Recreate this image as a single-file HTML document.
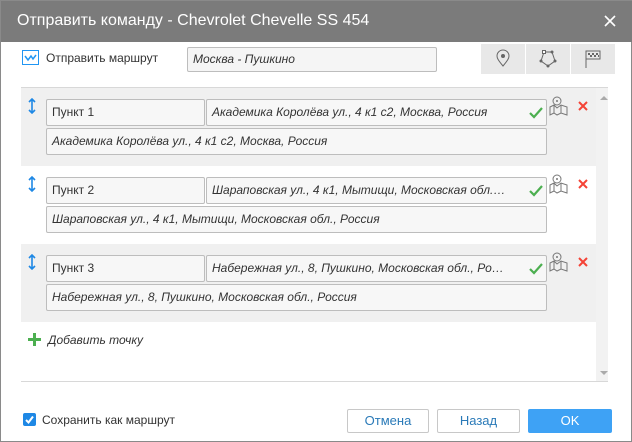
<!DOCTYPE html>
<html><head><meta charset="utf-8"><style>
*{box-sizing:border-box;margin:0;padding:0}
body{width:632px;height:442px;font-family:"Liberation Sans",Arial,sans-serif;font-size:12px;color:#333;background:#fff;position:relative;overflow:hidden}
.win{position:absolute;left:0;top:0;width:632px;height:442px;border:1px solid #8a8a8a;background:#fff}
.title{position:absolute;left:0;top:0;width:632px;height:41px;background:#7b7b7b;color:#fff;font-size:16px;line-height:40px;padding-left:16px}
.a{position:absolute}
.inp{position:absolute;background:#f7f7f7;border:1px solid #bdbdbd;border-radius:2px;height:27px;line-height:25px;padding-left:5px;font-size:12px;white-space:nowrap;overflow:hidden}
.it{font-style:italic}
.btn{position:absolute;top:43px;width:44px;height:30px;background:#e8e8e8}
.row{position:absolute;left:20px;width:575px;height:78px}
.g{background:#f0f0f0}
.fb{position:absolute;top:408px;height:24px;border:1px solid #c8c8c8;background:#fff;color:#2a7ab8;font-size:13px;text-align:center;line-height:22px;border-radius:2px}
</style></head><body><div class="win">
<div class="title">Отправить команду - Chevrolet Chevelle SS 454</div>
<svg class="a" style="left:602px;top:13px" width="14" height="14"><path d="M2 2L12 12M12 2L2 12" stroke="#fff" stroke-width="1.6"/></svg>
<svg class="a" style="left:21px;top:49px" width="17" height="15"><rect x="0.5" y="0.5" width="16" height="14" fill="none" stroke="#2196f3"/><path d="M3 6 L6 10 L9 6 L11 9 L14 5" fill="none" stroke="#2196f3" stroke-width="1.5"/></svg>
<div class="a" style="left:45px;top:50px;font-size:12px">Отправить маршрут</div>
<div class="inp it" style="left:186px;top:46px;width:250px;height:25px;line-height:23px;background:#f5f5f5">Москва - Пушкино</div>
<div class="btn" style="left:480px"><svg width="44" height="30"><path d="M22 22 C17 16 16 14 16 12 A6 6 0 0 1 28 12 C28 14 27 16 22 22Z" fill="none" stroke="#666"/><circle cx="22" cy="12" r="2" fill="#666"/></svg></div>
<div class="btn" style="left:525px"><svg width="44" height="30"><path d="M18 8 L26 8 L29 17 L22 22 L15 17 Z" fill="none" stroke="#666"/><rect x="16.5" y="6.5" width="3" height="3" fill="#fff" stroke="#666"/><circle cx="26" cy="8" r="1.5" fill="#666"/><circle cx="29" cy="17" r="1.5" fill="#666"/><circle cx="22" cy="22" r="1.5" fill="#666"/><circle cx="15" cy="17" r="1.5" fill="#666"/></svg></div>
<div class="btn" style="left:570px"><svg width="44" height="30"><path d="M15 24 V7 H29 V15 H15" fill="none" stroke="#666"/><path d="M17 9h2v2h-2zM21 9h2v2h-2zM25 9h2v2h-2zM19 11h2v2h-2zM23 11h2v2h-2zM27 11h1v2h-1z" fill="#666"/></svg></div>
<div class="a" style="left:20px;top:86px;width:587px;height:1px;background:#d8d8d8"></div>
<div class="a" style="left:595px;top:87px;width:12px;height:293px;background:#f2f2f2"></div>
<div class="a" style="left:599px;top:95px;width:0;height:0;border-left:4px solid transparent;border-right:4px solid transparent;border-bottom:4px solid #aaa"></div>
<div class="a" style="left:599px;top:370px;width:0;height:0;border-left:4px solid transparent;border-right:4px solid transparent;border-top:4px solid #aaa"></div>
<div class="a" style="left:20px;top:380px;width:587px;height:1px;background:#d8d8d8"></div>

<div class="row g" style="top:87px"></div>
<div class="row" style="top:165px"></div>
<div class="row g" style="top:243px"></div>

<svg class="a" style="left:27px;top:332px" width="13" height="13"><path d="M6.5 0V13M0 6.5H13" stroke="#4caf50" stroke-width="3"/></svg>
<div class="a it" style="left:47px;top:332px">Добавить точку</div>

<label class="a" style="left:22px;top:412px;width:13px;height:13px;background:#1e88e5;border-radius:2px"><svg width="13" height="13"><path d="M3 7 L5.5 9.5 L10 3.5" fill="none" stroke="#fff" stroke-width="2"/></svg></label>
<div class="a" style="left:41px;top:412px">Сохранить как маршрут</div>
<div class="fb" style="left:346px;width:82px">Отмена</div>
<div class="fb" style="left:436px;width:83px">Назад</div>
<div class="fb" style="left:527px;width:84px;background:#3ea2f5;border-color:#3ea2f5;color:#fff">OK</div>

<!-- row 1 -->
<svg class="a" style="left:27px;top:97px" width="8" height="16"><path d="M4 1V15M1 4L4 1L7 4M1 12L4 15L7 12" fill="none" stroke="#1e88e5" stroke-width="1.6"/></svg>
<div class="inp" style="left:45px;top:98px;width:159px">Пункт 1</div>
<div class="inp it" style="left:205px;top:98px;width:341px;padding-right:22px">Академика Королёва ул., 4 к1 с2, Москва, Россия</div>
<svg class="a" style="left:528px;top:106px" width="14" height="12"><path d="M1 6 L5 10 L13 1" fill="none" stroke="#4caf50" stroke-width="2.2"/></svg>
<div class="inp it" style="left:45px;top:127px;width:501px">Академика Королёва ул., 4 к1 с2, Москва, Россия</div>
<svg class="a" style="left:548px;top:95px" width="20" height="20"><circle cx="8" cy="5" r="4" fill="none" stroke="#777"/><circle cx="8" cy="5" r="1" fill="#777"/><path d="M1 11 L5 9 L8 12 L12 9 L18 11 V19 L12 17 L8 19 L5 17 L1 19 Z M5 9 V17 M12 9 V17" fill="none" stroke="#777"/></svg>
<svg class="a" style="left:577px;top:100px" width="10" height="10"><path d="M1 1L9 9M9 1L1 9" stroke="#f44336" stroke-width="2"/></svg>

<!-- row 2 -->
<svg class="a" style="left:27px;top:175px" width="8" height="16"><path d="M4 1V15M1 4L4 1L7 4M1 12L4 15L7 12" fill="none" stroke="#1e88e5" stroke-width="1.6"/></svg>
<div class="inp" style="left:45px;top:176px;width:159px">Пункт 2</div>
<div class="inp it" style="left:205px;top:176px;width:341px;padding-right:22px">Шараповская ул., 4 к1, Мытищи, Московская обл.…</div>
<svg class="a" style="left:528px;top:184px" width="14" height="12"><path d="M1 6 L5 10 L13 1" fill="none" stroke="#4caf50" stroke-width="2.2"/></svg>
<div class="inp it" style="left:45px;top:205px;width:501px">Шараповская ул., 4 к1, Мытищи, Московская обл., Россия</div>
<svg class="a" style="left:548px;top:173px" width="20" height="20"><circle cx="8" cy="5" r="4" fill="none" stroke="#777"/><circle cx="8" cy="5" r="1" fill="#777"/><path d="M1 11 L5 9 L8 12 L12 9 L18 11 V19 L12 17 L8 19 L5 17 L1 19 Z M5 9 V17 M12 9 V17" fill="none" stroke="#777"/></svg>
<svg class="a" style="left:577px;top:178px" width="10" height="10"><path d="M1 1L9 9M9 1L1 9" stroke="#f44336" stroke-width="2"/></svg>

<!-- row 3 -->
<svg class="a" style="left:27px;top:253px" width="8" height="16"><path d="M4 1V15M1 4L4 1L7 4M1 12L4 15L7 12" fill="none" stroke="#1e88e5" stroke-width="1.6"/></svg>
<div class="inp" style="left:45px;top:254px;width:159px">Пункт 3</div>
<div class="inp it" style="left:205px;top:254px;width:341px;padding-right:22px">Набережная ул., 8, Пушкино, Московская обл., Ро…</div>
<svg class="a" style="left:528px;top:262px" width="14" height="12"><path d="M1 6 L5 10 L13 1" fill="none" stroke="#4caf50" stroke-width="2.2"/></svg>
<div class="inp it" style="left:45px;top:283px;width:501px">Набережная ул., 8, Пушкино, Московская обл., Россия</div>
<svg class="a" style="left:548px;top:251px" width="20" height="20"><circle cx="8" cy="5" r="4" fill="none" stroke="#777"/><circle cx="8" cy="5" r="1" fill="#777"/><path d="M1 11 L5 9 L8 12 L12 9 L18 11 V19 L12 17 L8 19 L5 17 L1 19 Z M5 9 V17 M12 9 V17" fill="none" stroke="#777"/></svg>
<svg class="a" style="left:577px;top:256px" width="10" height="10"><path d="M1 1L9 9M9 1L1 9" stroke="#f44336" stroke-width="2"/></svg>
</div></body></html>
